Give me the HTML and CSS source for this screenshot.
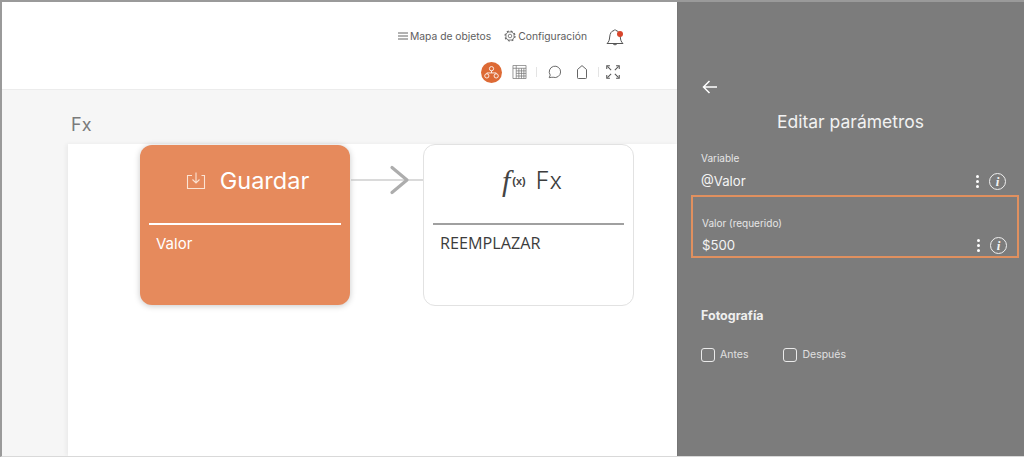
FILE: index.html
```html
<!DOCTYPE html>
<html lang="es">
<head>
<meta charset="utf-8">
<title>Editar parámetros</title>
<link rel="stylesheet" href="styles.css">
</head>
<body>
<div class="frame">
  <main class="main">
    <header class="topbar">
      <div class="toprow">
        <a class="toplink">
          <svg class="ico-menu" viewBox="0 0 10 8" width="10" height="8"><path d="M0 1h10M0 4h10M0 7h10" stroke="#666" stroke-width="1" fill="none"/></svg>
          Mapa de objetos
        </a>
        <a class="toplink gear">
          <svg viewBox="0 0 12 12" width="12" height="12"><g fill="none" stroke="#666"><circle cx="6" cy="6" r="1.800" stroke-width=".8"/><circle cx="6" cy="6" r="4.100" stroke-width=".8"/><circle cx="6" cy="6" r="5" stroke-width="1.200" stroke-dasharray="2 1.930"/></g></svg>
          Configuración
        </a>
        <span class="bell">
          <svg viewBox="0 0 20 20" width="20" height="20"><path d="M2 17.500c2-1.800 2.400-3.500 2.700-6.500.3-3.500 1.600-6 4.300-6.500C9.200 3.500 10.800 3.500 11 4.500c2.700.5 4 3 4.300 6.500.3 3 .7 4.700 2.700 6.500zM8 17.800c.3 1.300 3.700 1.300 4 0" fill="none" stroke="#555" stroke-width="1"/></svg>
          <i class="bell-dot"></i>
        </span>
      </div>
      <div class="toolrow">
        <span class="tool-active">
          <svg viewBox="0 0 20 20" width="17" height="17"><g fill="none" stroke="#fff" stroke-width="1"><circle cx="10" cy="5.500" r="2.500"/><circle cx="4.500" cy="14" r="2.500"/><circle cx="15.500" cy="14" r="2.500"/><path d="M10 8v2.500M4.500 11.500v-1h11v1"/></g></svg>
        </span>
        <svg class="tool-grid" viewBox="0 0 15 15" width="15" height="14"><path d="M.5.5h14v14H.5zM.5 3.500h14M4 .5v14M6.800 3.500v11M9.600 3.500v11M12.200 3.500v11M4 6.300h10.500M4 9h10.500M4 11.800h10.500" fill="none" stroke="#777" stroke-width=".8"/></svg>
        <span class="sep"></span>
        <svg class="tool-chat" viewBox="0 0 16 16" width="14" height="14"><path d="M2.500 14.500l1.200-3A6.500 6.500 0 1 1 7 14c-1.500 0-3 .1-4.500.5z" fill="none" stroke="#666" stroke-width="1.100"/></svg>
        <svg class="tool-tag" viewBox="0 0 10 14" width="10" height="14"><path d="M1.300 13.500a.8.800 0 0 1-.8-.8V4.500L5 .6l4.500 3.900v8.200a.8.800 0 0 1-.8.8z" fill="none" stroke="#666" stroke-width="1"/></svg>
        <span class="sep sep-b"></span>
        <svg class="tool-expand" viewBox="0 0 15 15" width="14" height="14"><path d="M1.500 1.500l4 4M13.500 1.500l-4 4M1.500 13.500l4-4M13.500 13.500l-4-4" stroke="#555" stroke-width="1.100" fill="none"/><path d="M.8 4.200V.8h3.400M14.200 4.200V.8h-3.400M.8 10.800v3.400h3.400M14.200 10.800v3.400h-3.400" stroke="#555" stroke-width="1.100" fill="none"/></svg>
      </div>
    </header>
    <section class="workspace">
      <h2 class="ws-title">Fx</h2>
      <div class="canvas">
        <article class="node node-save">
          <div class="node-head">
            <svg viewBox="0 0 20 18" width="20" height="18"><path d="M6 3.500H1.500v13h17v-13h-3M10 .5v10M6.500 7.500l3.500 3.500 3.500-3.500" fill="none" stroke="#fbe3d3" stroke-width="1.100"/></svg>
            <span class="node-title">Guardar</span>
          </div>
          <div class="node-body">Valor</div>
        </article>
        <svg class="connector" viewBox="0 0 72 30" width="72" height="30"><path d="M0 15h72" stroke="#b5b5b5" stroke-width="1"/><path d="M41 2.500l15 12.500-15 12.500" fill="none" stroke="#adadad" stroke-width="3.200" stroke-linecap="round" stroke-linejoin="round"/></svg>
        <article class="node node-fx">
          <div class="node-head">
            <span class="fx-ico"><i>f</i><b>(x)</b></span>
            <span class="node-title">Fx</span>
          </div>
          <div class="node-body">REEMPLAZAR</div>
        </article>
      </div>
    </section>
  </main>
  <aside class="panel">
    <svg class="back" viewBox="0 0 16 14" width="16" height="14"><path d="M15 7H1.500M7.500 1l-6 6 6 6" fill="none" stroke="#fff" stroke-width="1.500"/></svg>
    <h1 class="panel-title">Editar parámetros</h1>
    <div class="field field-plain">
      <label class="field-label">Variable</label>
      <div class="field-row">
        <span class="field-value">@Valor</span>
        <span class="dots"><i></i><i></i><i></i></span>
        <span class="info">i</span>
      </div>
    </div>
    <div class="field field-hl">
      <label class="field-label">Valor (requerido)</label>
      <div class="field-row">
        <span class="field-value">$500</span>
        <span class="dots"><i></i><i></i><i></i></span>
        <span class="info">i</span>
      </div>
    </div>
    <h3 class="section">Fotografía</h3>
    <div class="checks">
      <label class="check"><span class="box"></span>Antes</label>
      <label class="check"><span class="box"></span>Después</label>
    </div>
  </aside>
</div>
</body>
</html>
```
FILE: styles.css
```css
* { box-sizing: border-box; }
html, body { margin: 0; height: 100%; overflow: hidden; }
body { font-family: "Inter", "Noto Sans", sans-serif; background: #fff; }
.frame {
  width: 1024px; height: 457px; display: flex;
  border-top: 2px solid #9a9a9a; border-left: 2px solid #9a9a9a;
  border-bottom: 1px solid #d9d9d9;
  overflow: hidden;
}
.main { width: 675px; flex: none; display: flex; flex-direction: column; background: #f6f6f6; }
.topbar { height: 88px; background: #fff; border-bottom: 1px solid #ececec; padding: 0 55px 0 0; }
.toprow { display: flex; justify-content: flex-end; align-items: center; height: 40px; padding-top: 28px; font-size: 10.300px; color: #5e5e5e; }
.toplink { display: flex; align-items: center; gap: 2px; margin-right: 13px; }
.toplink.gear { margin-right: 18px; }
.bell { position: relative; width: 20px; height: 20px; margin-right: -3px; display: block; }
.bell-dot { position: absolute; top: 5px; right: 2px; width: 6px; height: 6px; border-radius: 50%; background: #d8452b; }
.toolrow { display: flex; align-items: center; justify-content: flex-end; height: 24px; margin-top: 18px; padding-right: 2px; }
.tool-active { width: 21px; height: 21px; border-radius: 50%; background: #dd6a35; display: flex; align-items: center; justify-content: center; margin-right: 10px; }
.sep { width: 1px; height: 10px; background: #e4e4e4; margin: 0 10px 0 9px; }
.tool-chat { margin-right: 16px; }
.sep-b { margin: 0 7px 0 11px; }
.workspace { flex: 1; padding: 0 0 0 66px; display: flex; flex-direction: column; min-height: 0; }
.ws-title { margin: 25px 0 8px 3px; font-size: 18px; line-height: 20px; font-weight: 400; color: #7b7b7b; height: 21px; }
.canvas { flex: 1; background: #fff; position: relative; box-shadow: -2px 0 4px rgba(0,0,0,.05); }
.node { position: absolute; top: 1px; width: 211px; height: 161px; border-radius: 12px; }
.node-save { left: 72px; width: 210px; height: 160px; background: #e68a5c; color: #fff; box-shadow: 0 1px 6px rgba(0,0,0,.22); }
.node-fx { left: 355px; top: 0; height: 162px; background: #fff; color: #3c3c3c; border: 1px solid #e2e2e2; }
.connector { position: absolute; left: 283px; top: 21px; }
.node-head { height: 80px; margin: 0 9px; border-bottom: 2px solid #fff; display: flex; align-items: center; justify-content: center; padding-bottom: 7px; }
.node-fx .node-head { height: 80px; border-bottom-color: #a0a0a0; gap: 10px; padding-left: 7px; }
.node-save .node-head { gap: 14px; padding-left: 5px; }
.node-title { font-size: 23.500px; line-height: 28px; font-family: "Inter", sans-serif; font-weight: 300; }
.node-save .node-title { font-weight: 400; }
.fx-ico { display: flex; align-items: center; color: #444; }
.fx-ico i { font-family: "Liberation Serif", serif; font-size: 30px; line-height: 28px; margin-right: 2px; }
.fx-ico b { font-size: 11px; font-family: "Liberation Sans", sans-serif; }
.node-body { padding: 9px 16px; font-size: 15px; line-height: 20px; }
.node-fx .node-body { font-family: "Open Sans", sans-serif; font-size: 16.200px; padding-top: 8px; }
.panel { flex: 1; background: #7c7c7c; color: #fff; padding: 0 5px 0 15px; display: flex; flex-direction: column; box-shadow: inset 1px 0 0 #767676; }
.back { margin: 78px 0 0 10px; display: block; flex: none; }
.panel-title { margin: 16px 0 0; text-align: center; font-size: 17.500px; font-weight: 400; line-height: 24px; color: #f2f2f2; padding-right: 10px; }
.field { display: flex; flex-direction: column; }
.field-plain { margin: 17px 13px 0 9px; height: 44px; }
.field-label { font-size: 10px; line-height: 14px; color: #e6e6e6; }
.field-row { display: flex; align-items: center; margin-top: 5px; height: 22px; }
.field-value { flex: 1; font-size: 13.200px; line-height: 20px; color: #f4f4f4; }
.dots { display: flex; flex-direction: column; gap: 2px; margin-right: 10px; }
.dots i { width: 3px; height: 3px; border-radius: 50%; background: #fff; display: block; }
.info { width: 17px; height: 17px; border: 1px solid #f0f0f0; border-radius: 50%; font-family: "Liberation Serif", serif; font-style: italic; font-weight: 700; font-size: 13px; line-height: 15px; text-align: center; color: #f4f4f4; }
.field-hl { width: 328px; height: 63px; margin-left: -1px; border: 2px solid #e0905f; padding: 19px 10px 0 9px; }
.field-hl .field-row { margin-top: 4px; }
.section { margin: 50px 0 0 9px; font-size: 12.500px; line-height: 16px; font-weight: 700; color: #efefef; }
.checks { display: flex; gap: 35px; margin: 24px 0 0 9px; }
.check { display: flex; align-items: center; gap: 5px; font-size: 10.500px; line-height: 14px; color: #e0e0e0; }
.box { width: 14px; height: 14px; border: 1px solid #eaeaea; border-radius: 3px; }
```
